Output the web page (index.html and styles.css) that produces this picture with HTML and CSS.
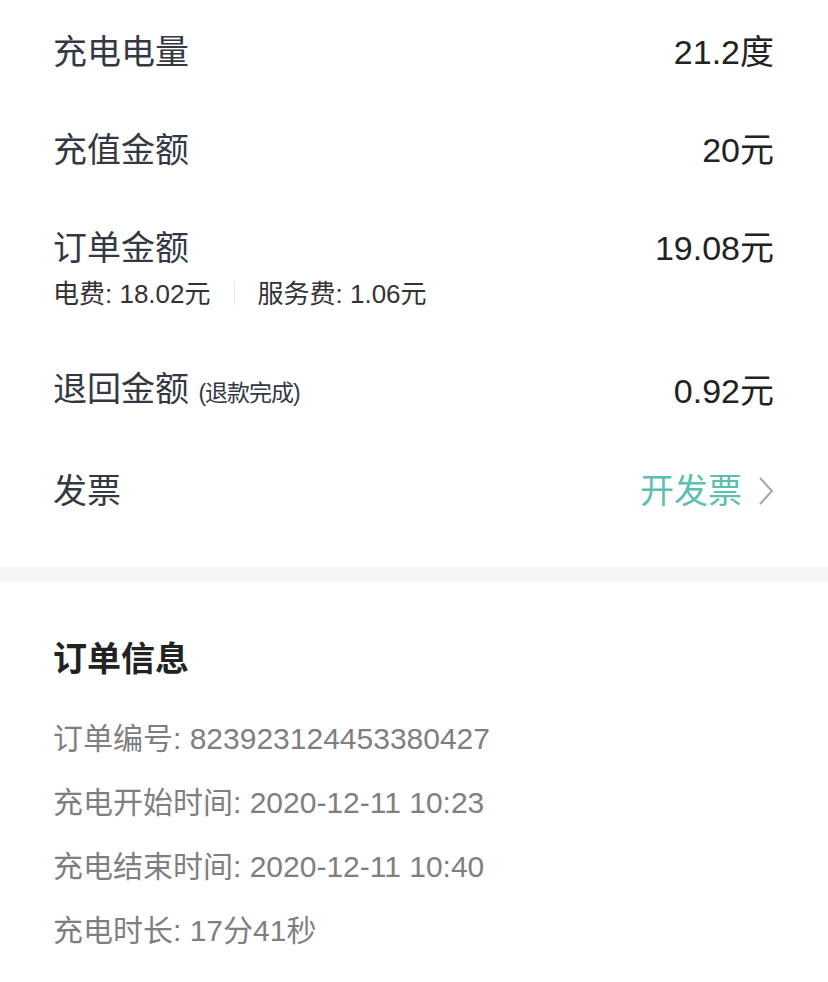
FILE: index.html
```html
<!DOCTYPE html>
<html lang="zh-CN">
<head>
    <meta charset="UTF-8">
    <meta name="viewport" content="width=device-width, initial-scale=1.0">
    <title>订单详情</title>
    <link rel="stylesheet" href="styles.css">
</head>
<body>
    <!-- 费用明细 -->
    <section class="fee-card">
        <div class="fee-row">
            <span class="fee-label">充电电量</span>
            <span class="fee-value">21.2度</span>
        </div>
        <div class="fee-row">
            <span class="fee-label">充值金额</span>
            <span class="fee-value">20元</span>
        </div>
        <div class="fee-row fee-row-detail">
            <div class="fee-main">
                <span class="fee-label">订单金额</span>
                <span class="fee-value">19.08元</span>
            </div>
            <div class="fee-sub">
                <span>电费: 18.02元</span>
                <span class="fee-sub-divider"></span>
                <span>服务费: 1.06元</span>
            </div>
        </div>
        <div class="fee-row">
            <span class="fee-label">退回金额 <small class="fee-note">(退款完成)</small></span>
            <span class="fee-value">0.92元</span>
        </div>
        <div class="fee-row">
            <span class="fee-label">发票</span>
            <a class="fee-link" href="#">开发票
                <svg class="chevron" viewBox="0 0 16 30" width="16" height="30">
                    <path d="M2 2 L14 15 L2 28" fill="none" stroke="#a6a6a6" stroke-width="2"/>
                </svg>
            </a>
        </div>
    </section>

    <div class="gap"></div>

    <!-- 订单信息 -->
    <section class="info-card">
        <h2 class="info-title">订单信息</h2>
        <ul class="info-list">
            <li>订单编号: 823923124453380427</li>
            <li>充电开始时间: 2020-12-11 10:23</li>
            <li>充电结束时间: 2020-12-11 10:40</li>
            <li>充电时长: 17分41秒</li>
        </ul>
    </section>
</body>
</html>
```

FILE: styles.css
```css
body {
    margin: 0;
    background: #fff;
    font-family: "Liberation Sans", "Noto Sans CJK SC", sans-serif;
    color: #222;
}
.fee-card {
    padding: 3px 54px 27px 53px;
}
.fee-row {
    display: flex;
    justify-content: space-between;
    align-items: center;
    padding: 28px 0;
    line-height: 42px;
}
.fee-row-detail {
    display: block;
    padding-top: 28px;
    padding-bottom: 28px;
}
.fee-main {
    display: flex;
    justify-content: space-between;
    line-height: 42px;
}
.fee-label {
    font-size: 34px;
    color: #343843;
}
.fee-value {
    font-size: 34px;
    color: #222;
}
.fee-note {
    font-size: 23px;
    color: #343843;
    letter-spacing: -1px;
}
.fee-sub {
    display: flex;
    align-items: center;
    margin-top: 7px;
    line-height: 36px;
    font-size: 26px;
    color: #333;
}
.fee-sub-divider {
    width: 1px;
    height: 22px;
    background: #e6e6e6;
    margin: 0 23px;
}
.fee-link {
    display: flex;
    align-items: center;
    font-size: 34px;
    color: #5cbfb2;
    text-decoration: none;
}
.chevron {
    margin-left: 16px;
}
.gap {
    height: 15px;
    background: #f6f6f6;
}
.info-card {
    padding: 53px 53px 0;
}
.info-title {
    margin: 0;
    font-size: 34px;
    line-height: 48px;
    font-weight: bold;
    color: #222;
}
.info-list {
    list-style-type: none;
    margin: 24px 0 0;
    padding: 0;
}
.info-list li {
    font-size: 30px;
    line-height: 64px;
    color: #7f7f7f;
}
```
